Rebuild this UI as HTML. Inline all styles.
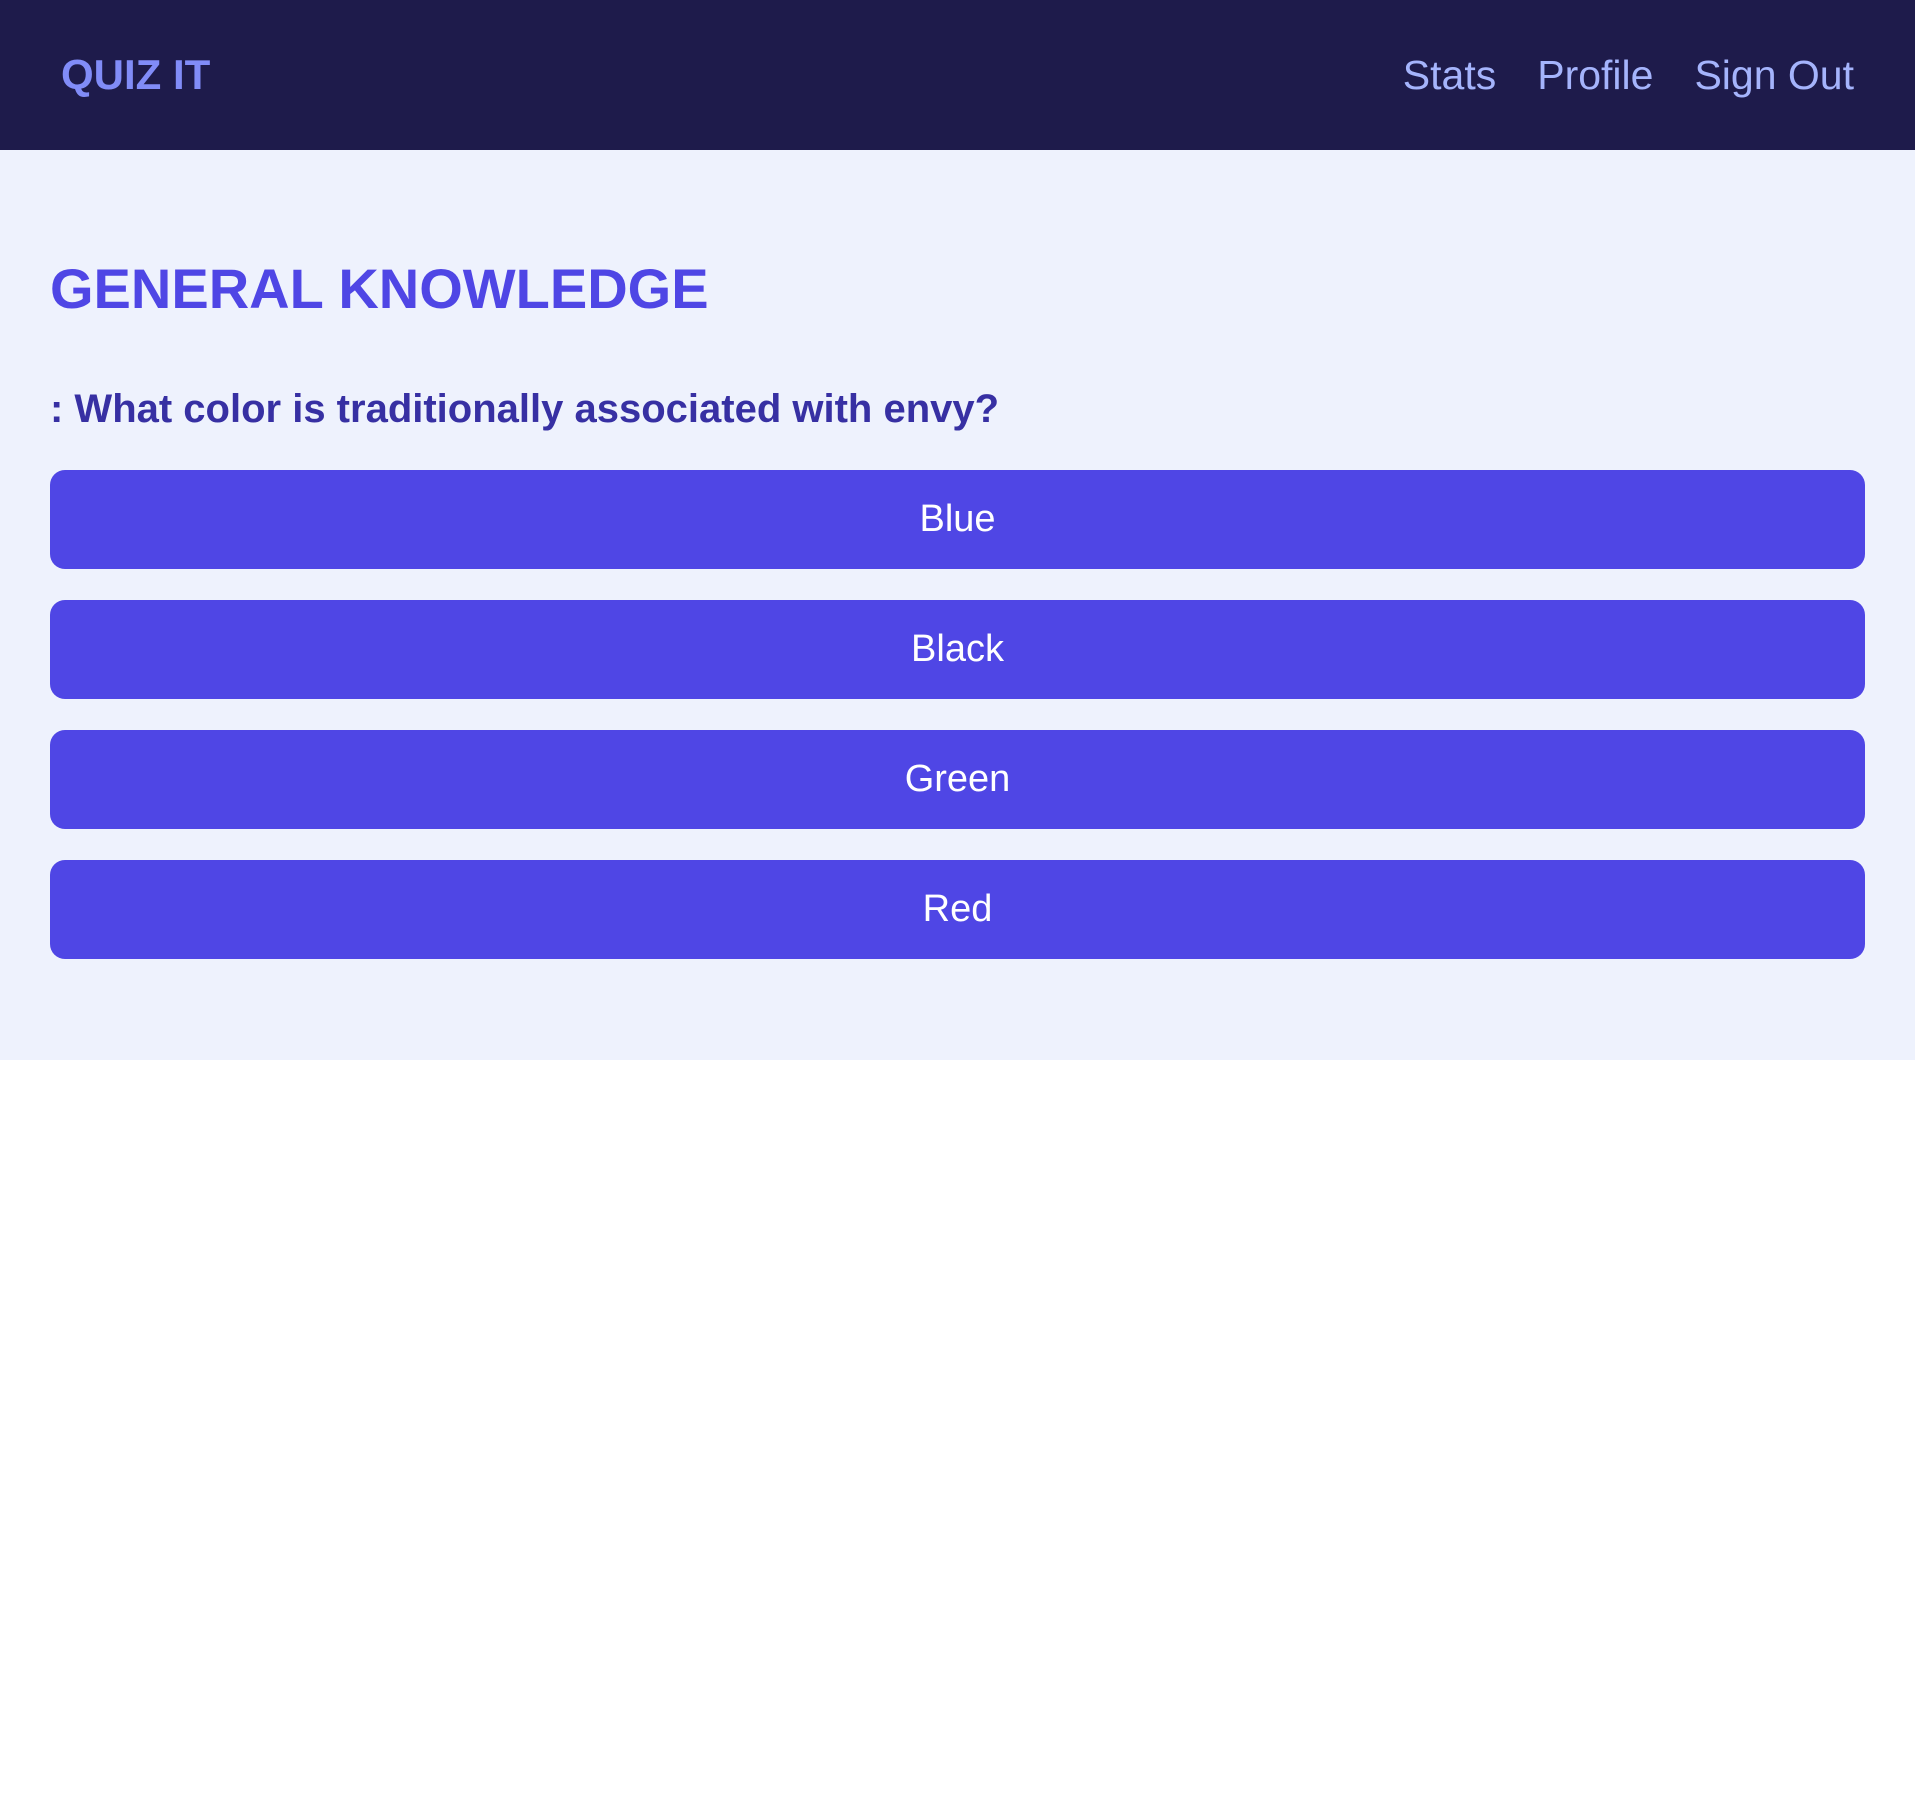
<!DOCTYPE html>
<html><head><style>
body{margin:0;width:1915px;height:1820px;background:#fff;font-family:"Liberation Sans",sans-serif;}
header{height:150px;background:#1e1b4b;position:relative;}
.logo{position:absolute;left:61px;top:50px;font-size:42px;font-weight:bold;color:#818cf8;line-height:50px;}
nav{position:absolute;right:61px;top:50px;font-size:41px;color:#a5b4fc;line-height:50px;}
nav span{margin-left:41px;}
main{background:#eef2fd;height:910px;position:relative;}
h1{position:absolute;left:50px;top:254px;margin:0;font-size:56px;color:#4f46e5;line-height:70px;}
.q{position:absolute;left:50px;top:386px;font-size:40px;font-weight:bold;color:#3730a3;line-height:46px;margin:0;}
.b{position:absolute;left:50px;width:1815px;height:99px;background:#4f46e5;border-radius:15px;color:#fff;font-size:38px;text-align:center;line-height:99px;}
</style></head><body>
<header><div class="logo">QUIZ IT</div><nav><span>Stats</span><span>Profile</span><span>Sign Out</span></nav></header>
<main>
<h1 style="top:104px">GENERAL KNOWLEDGE</h1>
<p class="q" style="top:236px">: What color is traditionally associated with envy?</p>
<div class="b" style="top:320px">Blue</div>
<div class="b" style="top:450px">Black</div>
<div class="b" style="top:580px">Green</div>
<div class="b" style="top:710px">Red</div>
</main>
</body></html>
